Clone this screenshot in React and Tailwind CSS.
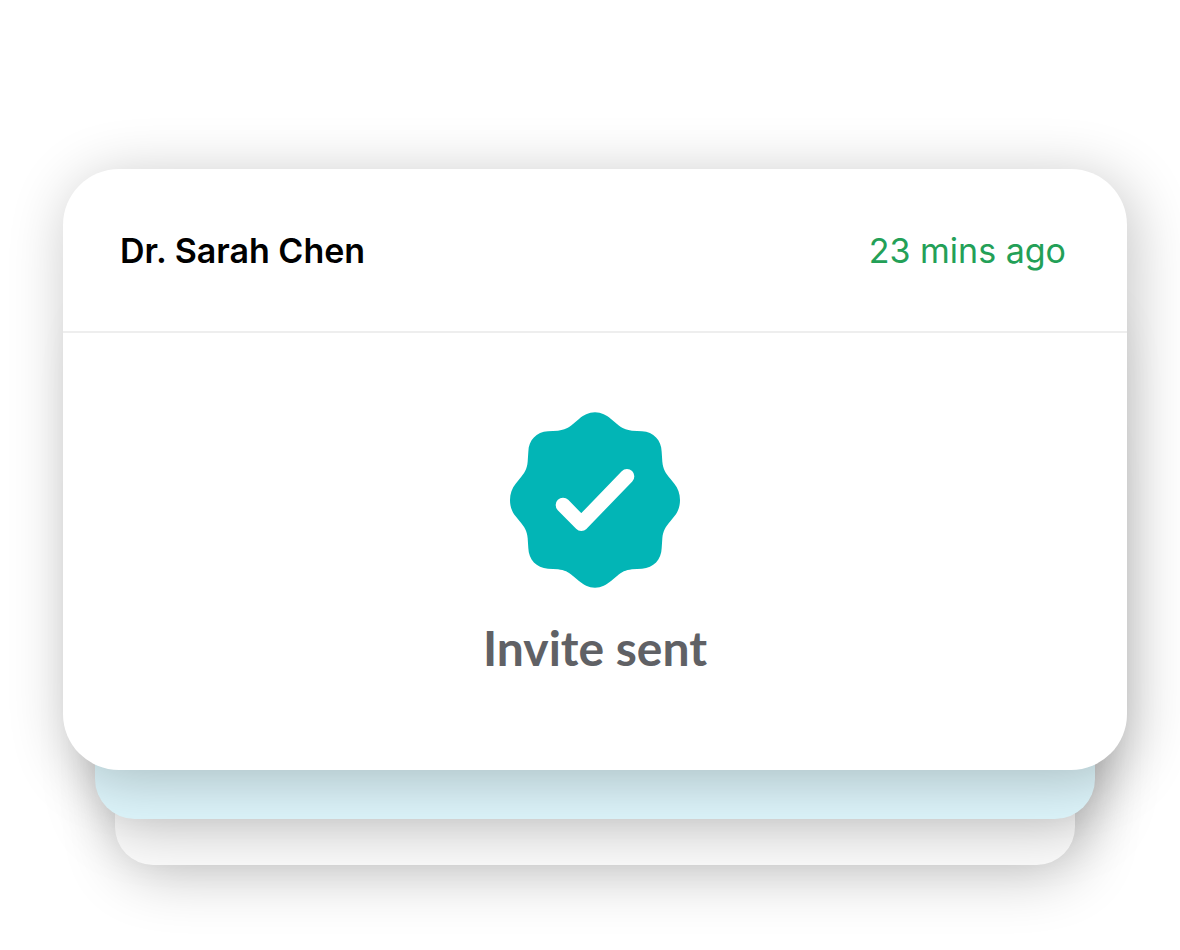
function VerifiedBadge() {
  return (
    <svg className="w-[170px] h-[176px]" viewBox="59 36 510 528" fill="none" aria-hidden="true">
      <path
        fill="#02b5b6"
        d="M314 37C333 37 349 46 362 57L380 72C395 85 405 89 425 92L455 94C490 96 513 121 514 155L516 185C518 208 526 219 540 236L552 251C563 264 569 281 569 300C569 319 563 336 552 349L540 364C526 381 518 392 516 415L514 445C513 479 490 504 455 506L425 508C405 511 395 515 380 528L362 543C349 554 333 563 314 563C295 563 279 554 266 543L248 528C233 515 223 511 203 508L173 506C138 504 115 479 114 445L112 415C110 392 102 381 88 364L76 349C65 336 59 319 59 300C59 281 65 264 76 251L88 236C102 219 110 208 112 185L114 155C115 121 138 96 173 94L203 92C223 89 233 85 248 72L266 57C279 46 295 37 314 37Z"
      />
      <path d="M218 315L273 371L410 229" stroke="#fff" strokeWidth="44" strokeLinecap="round" strokeLinejoin="round" />
    </svg>
  );
}

export default function App() {
  return (
    <main className="min-h-screen bg-white pt-[169px] pl-[63px] pr-[53px] pb-[84px]">
      {/* Front card */}
      <article className="relative z-20 bg-white rounded-[56px] shadow-[6px_9px_60px_rgba(0,0,0,0.24)]">
        <header className="flex items-center justify-between pl-[57px] pr-[61px] pt-[62px] pb-[60px] border-b-2 border-[#eeeeee] font-['Inter',sans-serif] text-[34px] leading-[40px]">
          <h2 className="font-semibold text-black">Dr. Sarah Chen</h2>
          <time className="text-[#23a057]">23 mins ago</time>
        </header>

        <div className="flex flex-col items-center pt-[79px] pb-[94px]">
          <VerifiedBadge />
          <p className="mt-8 font-['Lato',sans-serif] font-bold text-[48px] leading-[56px] text-[#606165]">
            Invite sent
          </p>
        </div>
      </article>

      {/* Cards stacked behind */}
      <div className="relative z-10 mx-8 -mt-[460px] h-[509px] rounded-[40px] bg-[#ddf5fb] shadow-[6px_9px_60px_rgba(0,0,0,0.24)]" />
      <div className="mx-[52px] -mt-[400px] h-[446px] rounded-[38px] bg-[#fcfcfc] shadow-[6px_9px_60px_rgba(0,0,0,0.24)]" />
    </main>
  );
}
